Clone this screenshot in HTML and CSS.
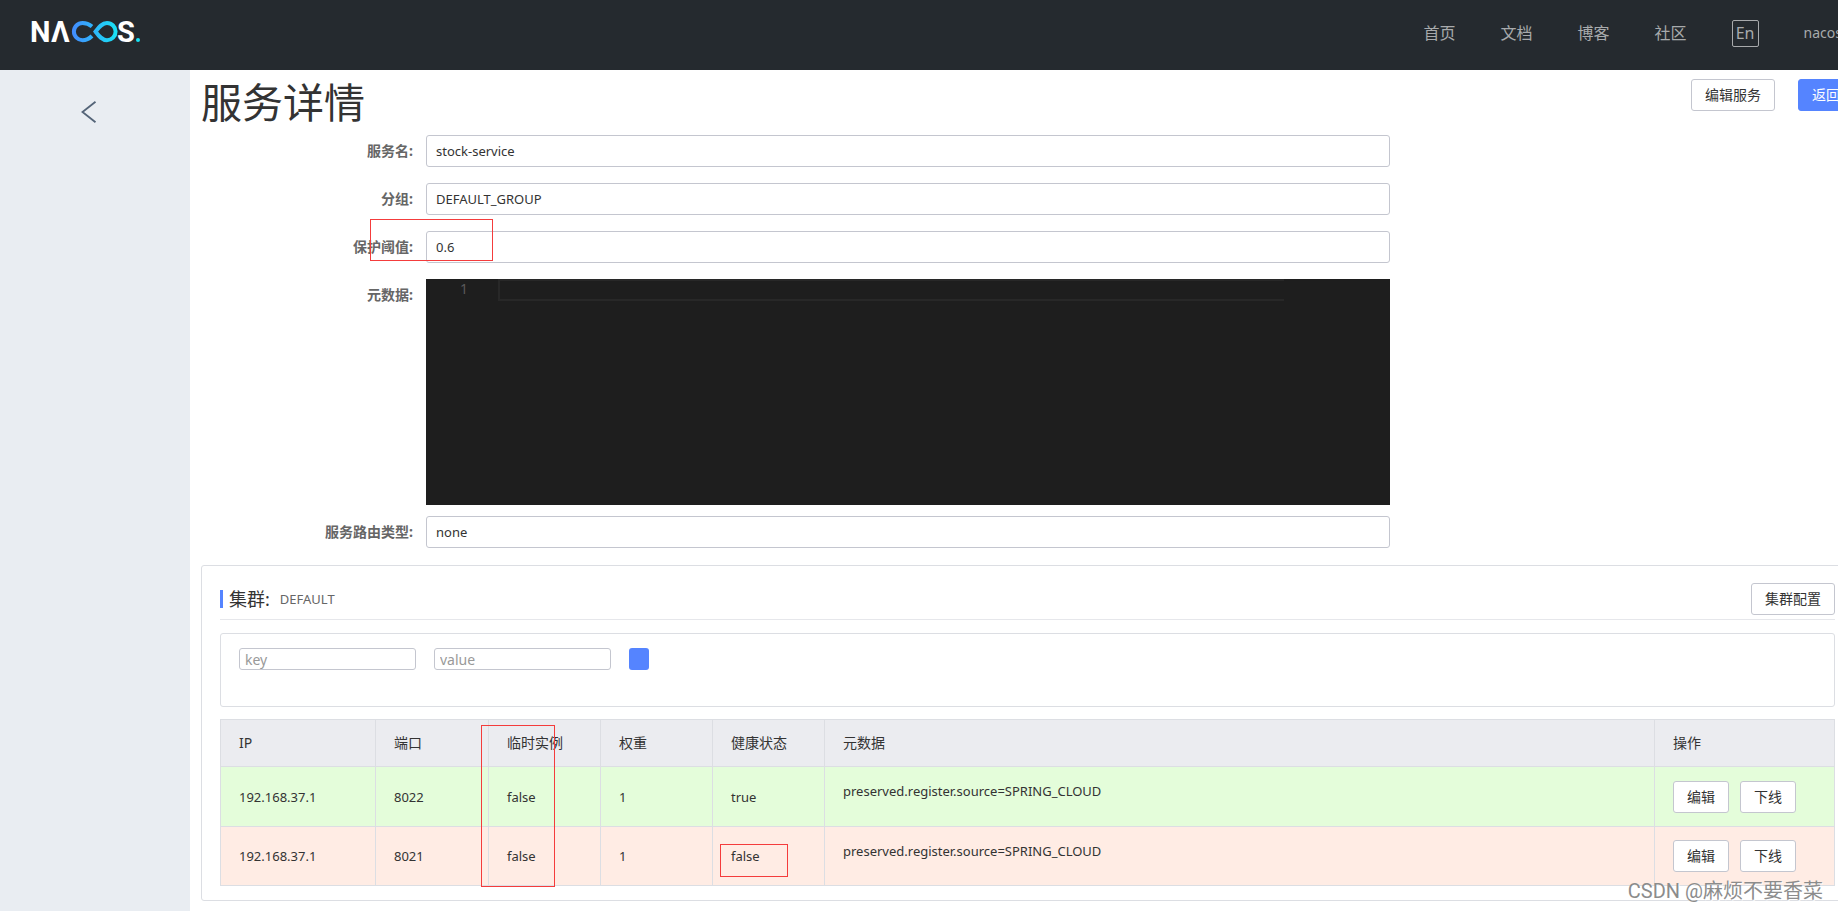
FILE: index.html
```html
<!DOCTYPE html>
<html lang="zh-CN">
<head>
<meta charset="utf-8">
<title>Nacos</title>
<link rel="stylesheet" href="styles.css">
</head>
<body>
<div class="page">
  <header class="topbar">
    <a class="logo" href="#" aria-label="Nacos">
      <svg width="114" height="46" viewBox="0 -10 114 46">
        <defs>
          <linearGradient id="loop" gradientUnits="userSpaceOnUse" x1="42" y1="0" x2="88" y2="0">
            <stop offset="0" stop-color="#4489ff"/>
            <stop offset="1" stop-color="#18e2f5"/>
          </linearGradient>
        </defs>
        <g class="logo-type"><text x="1" y="23">N</text><text x="22" y="23">Λ</text><text x="88" y="23">S</text></g>
        <path d="M63 7.500C60 5 57.500 4 53.500 4a8.600 8.600 0 1 0 0 17.200c3.500 0 6.500-1.200 9.500-4.200M66.500 12.600C70 8 73 4 78 4a8.600 8.600 0 1 1 0 17.200C73 21.200 70 17.200 66.500 12.600Z" fill="none" stroke="url(#loop)" stroke-width="4"/>
        <circle cx="109" cy="21" r="2" fill="#18e2f5"/>
      </svg>
    </a>
    <nav class="nav">
      <a href="#">首页</a><a href="#">文档</a><a href="#">博客</a><a href="#">社区</a>
      <button class="lang" type="button">En</button>
      <a class="user" href="#">nacos</a>
    </nav>
  </header>
  <div class="body">
    <aside class="side">
      <button class="back" type="button" aria-label="返回">
        <svg width="16" height="22" viewBox="0 0 16 22"><path d="M14.500 .8 1.500 11l13 10.200" fill="none" stroke="#546478" stroke-width="1.800"/></svg>
      </button>
    </aside>
    <main class="main">
      <div class="heading">
        <h1>服务详情</h1>
        <div class="actions">
          <button class="btn" type="button">编辑服务</button>
          <button class="btn primary" type="button">返回</button>
        </div>
      </div>
      <form class="form">
        <label for="name">服务名:</label><input id="name" value="stock-service" readonly>
        <label for="group">分组:</label><input id="group" value="DEFAULT_GROUP" readonly>
        <label for="threshold">保护阈值:</label><input id="threshold" value="0.6" readonly>
        <span class="label">元数据:</span>
        <div class="editor"><span class="line-no">1</span><div class="line"></div></div>
        <label for="selector">服务路由类型:</label><input id="selector" value="none" readonly>
      </form>
      <section class="cluster">
        <div class="cluster-head">
          <h2>集群:</h2><span class="cluster-name">DEFAULT</span>
          <button class="btn" type="button">集群配置</button>
        </div>
        <div class="filter">
          <input placeholder="key" aria-label="key">
          <input placeholder="value" aria-label="value">
          <button class="add" type="button" aria-label="添加"></button>
        </div>
        <table class="instances">
          <colgroup><col class="c-ip"><col class="c-port"><col class="c-small"><col class="c-small"><col class="c-small"><col><col class="c-ops"></colgroup>
          <thead><tr><th>IP</th><th>端口</th><th>临时实例</th><th>权重</th><th>健康状态</th><th>元数据</th><th>操作</th></tr></thead>
          <tbody>
            <tr class="healthy"><td>192.168.37.1</td><td>8022</td><td>false</td><td>1</td><td>true</td><td><p>preserved.register.source=SPRING_CLOUD</p></td><td><div class="ops"><button class="btn" type="button">编辑</button><button class="btn" type="button">下线</button></div></td></tr>
            <tr class="unhealthy"><td>192.168.37.1</td><td>8021</td><td>false</td><td>1</td><td>false</td><td><p>preserved.register.source=SPRING_CLOUD</p></td><td><div class="ops"><button class="btn" type="button">编辑</button><button class="btn" type="button">下线</button></div></td></tr>
          </tbody>
        </table>
      </section>
    </main>
  </div>
  <div class="mark mark-threshold"></div>
  <div class="mark mark-ephemeral"></div>
  <div class="mark mark-health"></div>
  <div class="credit">CSDN @麻烦不要香菜</div>
</div>
</body>
</html>
```
FILE: styles.css
```css
* { box-sizing: border-box; }
body {
  margin: 0;
  overflow: hidden;
  background: #fff;
  color: #333;
  font: 14px/20px "Noto Sans", "Noto Sans CJK SC", sans-serif;
}
h1, h2, p { margin: 0; font-weight: 400; }
button, input { font: inherit; color: inherit; }
a { color: inherit; text-decoration: none; }

/* the console keeps a little more width than the window */
.page { position: relative; width: calc(100% + 27px); min-height: 100vh; display: flex; flex-direction: column; }

.topbar { display: flex; align-items: center; justify-content: space-between; height: 70px; padding: 0 23px 0 29px; background: #252a2f; }
.logo { display: flex; margin-bottom: 6px; }
.logo-type { fill: #fff; font: 700 29px Roboto, sans-serif; }
.nav { display: flex; align-items: center; gap: 45px; margin-bottom: 4px; font-size: 16px; line-height: 24px; color: #a8aaac; }
.lang { width: 27px; height: 27px; padding: 0; border: 1px solid #a8aaac; border-radius: 2px; background: none; line-height: 22px; }
.user { font-size: 14px; }

.body { flex: 1; display: flex; }
.side { flex: none; width: 190px; padding: 31px 0 0 81px; background: #e9edf2; }
.back { display: block; padding: 0; border: 0; background: none; }
.back svg { display: block; }
.main { flex: 1; min-width: 0; padding: 0 11px 10px; }

.heading { display: flex; justify-content: space-between; height: 65px; }
h1 { font-size: 41px; line-height: 64px; }
.actions { display: flex; gap: 23px; padding-top: 9px; }

.btn { height: 32px; padding: 0 13px; border: 1px solid #c4c6cf; border-radius: 3px; background: #fff; white-space: nowrap; font-size: 14px; line-height: 20px; }
.primary { border-color: #5584ff; background: #5584ff; color: #fff; }

.form { display: grid; grid-template-columns: 225px 964fr 464fr; row-gap: 16px; }
.form label, .label { grid-column: 1; padding: 6px 13px 0 0; text-align: right; font-weight: 700; color: #666; }
.form input { grid-column: 2; width: 100%; height: 32px; padding: 0 9px; border: 1px solid #c4c6cf; border-radius: 3px; font-size: 13px; }
.editor { grid-column: 2; display: flex; height: 226px; margin-bottom: -5px; background: #1e1e1e; }
.line-no { width: 72px; padding-right: 30px; text-align: right; color: #5a5a5a; }
.line { flex: 1; height: 22px; margin-right: 106px; border: 2px solid #282828; border-right: 0; }

.cluster { margin-top: 17px; padding: 17px 18px 14px; border: 1px solid #dcdee3; border-radius: 3px; }
.cluster-head { display: flex; align-items: center; height: 37px; padding-bottom: 4px; border-bottom: 1px solid #e6e7eb; }
h2 { padding-left: 6px; border-left: 3px solid #5584ff; font-size: 18px; line-height: 18px; }
.cluster-name { margin-left: 10px; font-size: 13px; color: #666; }
.cluster-head .btn { margin-left: auto; }

.filter { display: flex; gap: 18px; height: 74px; margin: 13px 0 12px; padding: 14px 18px; border: 1px solid #dcdee3; border-radius: 3px; }
.filter input { width: 177px; height: 22px; padding: 0 5px; border: 1px solid #c4c6cf; border-radius: 3px; }
.filter input::placeholder { color: #999; }
.add { width: 20px; height: 22px; padding: 0; border: 0; border-radius: 3px; background: #5584ff; }

.instances { width: 100%; table-layout: fixed; border-collapse: collapse; }
.instances th, .instances td { padding: 0 0 0 18px; border: 1px solid #dcdee3; text-align: left; font-weight: 400; }
.instances th { height: 47px; background: #ebecf0; }
.instances td { height: 60px; font-size: 13px; }
.instances tr.unhealthy td { height: 59px; }
.instances p { margin-bottom: 11px; }
.c-ip { width: 155px; }
.c-port { width: 113px; }
.c-small { width: 112px; }
.c-ops { width: 180px; }
.healthy { background: #e4fdda; }
.unhealthy { background: #ffece4; }
.ops { display: flex; gap: 11px; }
.ops .btn { width: 56px; padding: 0; }

.mark { position: absolute; border: 1px solid #f43c3c; }
.mark-threshold { left: 370px; top: 219px; width: 123px; height: 42px; }
.mark-ephemeral { left: 481px; top: 725px; width: 74px; height: 162px; }
.mark-health { left: 720px; top: 844px; width: 68px; height: 33px; }
.credit { position: absolute; right: 42px; top: 878px; font: 20px/26px Roboto, "Noto Sans CJK SC", sans-serif; color: #8c8c8c; text-shadow: 1px 1px 0 #fff; white-space: nowrap; }
```
